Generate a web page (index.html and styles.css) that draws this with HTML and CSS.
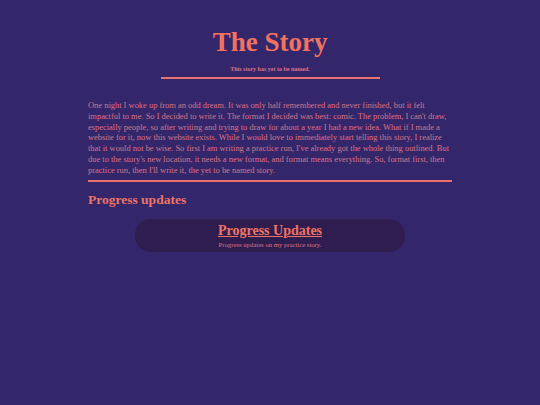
FILE: index.html
```html
<!DOCTYPE html>
<html lang="en">
<head>
  <meta charset="UTF-8">
  <title>The Story</title>
  <link rel="stylesheet" href="styles.css">
</head>
<body>
  <header class="site-header">
    <h1>The Story</h1>
    <p class="tagline">This story has yet to be named.</p>
    <hr class="short-rule">
  </header>

  <main class="content">
    <p class="intro">One night I woke up from an odd dream. It was only half remembered and never finished, but it felt impactful to me. So I decided to write it. The format I decided was best: comic. The problem, I can't draw, especially people, so after writing and trying to draw for about a year I had a new idea. What if I made a website for it, now this website exists. While I would love to immediately start telling this story, I realize that it would not be wise. So first I am writing a practice run, I've already got the whole thing outlined. But due to the story's new location, it needs a new format, and format means everything. So, format first, then practice run, then I'll write it, the yet to be named story.</p>
    <hr class="wide-rule">

    <h2>Progress updates</h2>
    <div class="card">
      <a class="card-title" href="#">Progress Updates</a>
      <p class="card-text">Progress updates on my practice story.</p>
    </div>
  </main>
</body>
</html>
```

FILE: styles.css
```css
body {
  margin: 0;
  background: #33266a;
  color: #da7488;
  font-family: "Liberation Serif", "Times New Roman", serif;
}

.site-header {
  text-align: center;
  padding-top: 26px;
}

.site-header h1 {
  margin: 0;
  font-size: 27px;
  color: #f27260;
  line-height: 32px;
}

.tagline {
  margin: 8px 0 0;
  font-size: 6px;
  font-weight: bold;
}

.short-rule {
  width: 219px;
  margin: 5px auto 0;
  border: 0;
  height: 2px;
  background: #e8736f;
}

.content {
  width: 364px;
  margin: 0 auto;
  padding-top: 21px;
}

.intro {
  margin: 0;
  font-size: 8.45px;
  line-height: 10.8px;
}

.wide-rule {
  border: 0;
  height: 2px;
  background: #e8736f;
  margin: 4px 0 0;
}

.content h2 {
  margin: 10px 0 0;
  font-size: 13.5px;
  color: #ec7468;
}

.card {
  width: 270px;
  margin: 11px auto 0;
  padding: 2px 0 4px;
  background: #2f1d50;
  border-radius: 16px;
  text-align: center;
}

.card-title {
  font-size: 14px;
  font-weight: bold;
  color: #f07462;
}

.card-text {
  margin: 2px 0 0;
  font-size: 6.7px;
}
```
